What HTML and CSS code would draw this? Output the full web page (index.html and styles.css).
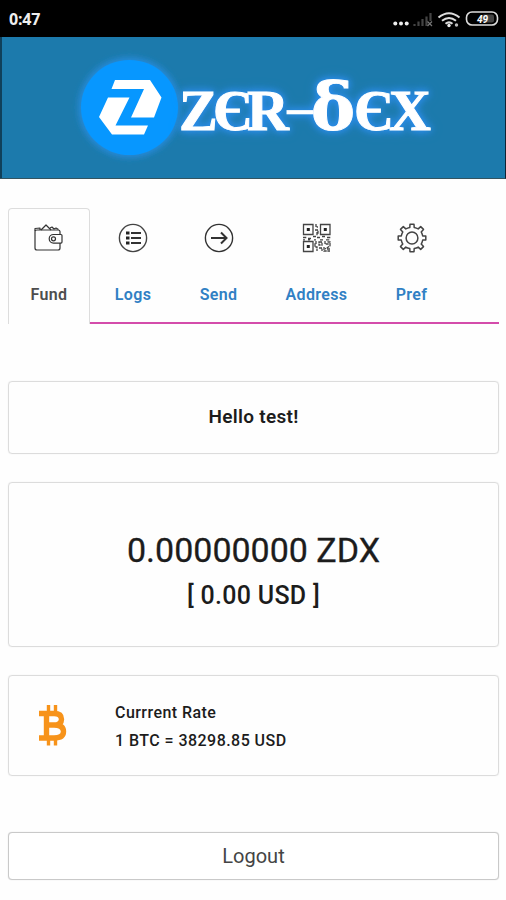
FILE: index.html
```html
<!DOCTYPE html>
<html lang="en">
<head>
<meta charset="utf-8">
<title>ZER-DEX</title>
<link rel="stylesheet" href="styles.css">
</head>
<body>
<header class="status">
  <span class="clock">0:47</span>
  <svg class="status-icons" width="112" height="22" viewBox="0 0 112 22">
    <g fill="#eee"><circle cx="4.300" cy="14.500" r="2"/><circle cx="10" cy="14.500" r="2"/><circle cx="15.700" cy="14.500" r="2"/></g>
    <path d="M23.500 15v2M27.500 12.500V17M31.500 10v7M35.500 7.500V17M39.500 4v8" stroke="#444" stroke-width="2.200"/>
    <path d="M36.500 12.500l4.500 4.500m0-4.500l-4.500 4.500" stroke="#777" stroke-width="1.200"/>
    <g fill="none" stroke="#ddd" stroke-width="2"><path d="M47.500 8.500Q58 0 68.500 8.500M51 11.800q7-5.600 14 0M54.500 14.700q3.500-2.700 7 0"/></g>
    <circle cx="58" cy="16.500" r="1.700" fill="#eee"/><circle cx="65.500" cy="16" r="1.700" fill="#bbb"/>
    <rect x="75.500" y="3" width="31" height="13" rx="5.500" fill="none" stroke="#ddd" stroke-width="1.600"/>
    <rect x="91" y="5.500" width="12" height="8" rx="2" fill="#444"/>
    <text class="battery" x="91.500" y="13.500" text-anchor="middle">49</text>
  </svg>
</header>
<div class="banner">
  <svg width="503" height="141" viewBox="2 37 503 141" role="img" aria-label="ZER-DEX">
    <defs><filter id="glow" x="-20%" y="-20%" width="140%" height="140%"><feGaussianBlur stdDeviation="3"/></filter></defs>
    <ellipse cx="129.500" cy="107.500" rx="51" ry="50" fill="#258bdc" filter="url(#glow)"/>
    <ellipse cx="129.500" cy="107.500" rx="48.500" ry="47.500" fill="#0797ff"/>
    <g fill="#fff">
      <path d="M115 80h35l11.500 17.500L154 117.500h-23L144 89h-32.500z"/>
      <path d="M108 97.500h21.500L115.500 125.500H148l-4 9h-32L99 117z"/>
    </g>
    <text class="wordmark" y="130" x="179 213 247 288 311 354 389">ZЄR<tspan class="dash" dy="-12">—</tspan><tspan class="delta" dy="12">δ</tspan>ЄX</text>
  </svg>
</div>
<nav class="tabs">
  <a class="tab fund active">
    <svg class="icon" viewBox="0 0 30 30"><g fill="none" stroke="#333" stroke-width="1.200" stroke-linejoin="round"><path d="M26 11V8.500q0-1.500-2-1.500H3Q1 7 1 8.500V25q0 2 2 2h21q2 0 2-2v-5"/><path d="M1 8V5.500l5-.5v2M7 7l5-5 5 5M16 5l2-1 2 2 2-1 2.500 1.500"/><path d="M27 11.500h-7.500a4.300 4.300 0 0 0 0 8.600H27q1 0 1-1v-6.600q0-1-1-1z"/><circle cx="19.500" cy="15.800" r="2"/></g></svg>
    <span>Fund</span>
  </a>
  <a class="tab logs">
    <svg class="icon" viewBox="0 0 30 30"><circle cx="15" cy="15" r="13.600" fill="none" stroke="#444" stroke-width="1.400"/><path d="M8 10h3.500M8 15h3.500M8 20h3.500" stroke="#222" stroke-width="3.200"/><path d="M13 10h10M13 15h10M13 20h10" stroke="#333" stroke-width="2"/></svg>
    <span>Logs</span>
  </a>
  <a class="tab send">
    <svg class="icon" viewBox="0 0 30 30" fill="none" stroke="#333"><circle cx="15" cy="15" r="13.600" stroke-width="1.400"/><path d="M7 15h15M17 9.500l5.500 5.500-5.500 5.500" stroke-width="2"/></svg>
    <span>Send</span>
  </a>
  <a class="tab address">
    <svg class="icon" viewBox="0 0 30 30"><g fill="none" stroke="#444" stroke-width="1.300"><path d="M1.500 1.500h9.500v10H1.500zM18.500 1.500H28v10h-9.500zM1.500 18.500h9.500v10H1.500z"/><path d="M14 1v3h2M13 7h3v4M15 9v4M1 14.500h4m1 1h3m2-2h3m1 1h3m2-1h3m2 1h4M1 16.800h2m3 0h2m4 0h2m4 0h3m3 0h4M14 18v3h-1v3h2v4M17 19h3v3h-3zM17 25h3v3M23 18v3h3v-2h2v4l-5 3M22 24v4h6M25 26h3" stroke-dasharray="3 .7"/></g><path d="M4.800 5h3v3h-3zM21.800 5h3v3h-3zM4.800 22h3v3h-3z" fill="#222"/></svg>
    <span>Address</span>
  </a>
  <a class="tab pref">
    <svg class="icon" viewBox="0 0 30 30" fill="none" stroke="#444" stroke-width="1.500" stroke-linejoin="round"><path d="M12.800 4.400 13 1.200h4l.2 3.200q2.300.5 4 1.500l2.500-2.300 2.800 2.800-2.300 2.500q1 1.700 1.500 4l3.100.1v4l-3.100.1q-.5 2.300-1.500 4l2.300 2.500-2.800 2.800-2.500-2.300q-1.700 1-4 1.500l-.2 3.200h-4l-.2-3.200q-2.300-.5-4-1.500l-2.500 2.300-2.800-2.800 2.300-2.500q-1-1.700-1.500-4L1.200 17v-4l3.100-.1q.5-2.300 1.500-4L3.500 6.400l2.800-2.800 2.500 2.300q1.700-1 4-1.500z"/><circle cx="15" cy="15" r="5.900"/></svg>
    <span>Pref</span>
  </a>
</nav>
<main>
  <section class="card hello">Hello test!</section>
  <section class="card balance">
    <div class="amount">0.00000000 ZDX</div>
    <div class="fiat">[ 0.00 USD ]</div>
  </section>
  <section class="card rate">
    <svg class="coin" width="28" height="41" viewBox="0 0 28 41"><g fill="none" stroke="#f7931a"><path d="M9.500 0v7M16.500 0v7M9.500 34v6.500M16.500 34v6.500" stroke-width="3.400"/><path d="M0 8.500h15q7.500 0 7.500 5.700T15 20H9m6 0q9.500 0 9.500 6.500T15 33H0M7.500 8v25" stroke-width="5.400"/></g></svg>
    <div class="rate-text"><div>Currrent Rate</div><div>1 BTC = 38298.85 USD</div></div>
  </section>
  <button class="logout">Logout</button>
</main>
</body>
</html>
```

FILE: styles.css
```css
* { box-sizing: border-box; }
body { margin: 0; width: 506px; height: 900px; overflow: hidden; background: #fefefe; color: #1c1c1c; font-family: Roboto, "Liberation Sans", sans-serif; }
.status { display: flex; justify-content: space-between; height: 37px; padding: 8px 2px 0 9px; background: #000; color: #eee; }
.clock { font: 700 16px/22px "Open Sans", sans-serif; letter-spacing: -.2px; }
.status-icons { display: block; margin-top: 1px; margin-right: 1px; }
.battery { font: italic 700 10px Roboto, sans-serif; fill: #fff; }
.banner { height: 142px; padding-left: 2px; border-right: 1px solid #123; border-bottom: 1px solid #345460; background: #1c7aac; box-shadow: inset 2px 0 #10405a; }
.banner svg { display: block; }
.wordmark { font: 700 58px "Liberation Serif", serif; fill: #fff; stroke: #fff; stroke-width: 1px; filter: drop-shadow(0 0 3px #2b8df0) drop-shadow(0 0 4px #2b8be0); }
.delta { font: 700 66px "DejaVu Serif", serif; }
.dash { font-size: 24px; stroke-width: 2.5px; }
.tabs { display: flex; height: 116px; margin: 29px 7px 0 8px; }
.tab { display: flex; flex-direction: column; align-items: center; padding-top: 15px; border-bottom: 2px solid #d44cab; color: #3080c4; font-size: 16px; font-weight: 600; line-height: 20px; letter-spacing: .35px; }
.tab span { margin-top: 32px; }
.icon { display: block; width: 30px; height: 30px; }
.fund { width: 82px; padding-top: 14px; border: 1px solid #ddd; border-bottom: 0; border-radius: 4px 4px 0 0; color: #4d4d4d; }
.logs { width: 86px; }
.send { width: 85px; }
.address { width: 111px; }
.pref { flex: 1; padding-right: 48px; }
main { display: flex; flex-direction: column; padding: 57px 7px 0 8px; }
.card { margin-bottom: 28px; border: 1px solid #dcdcdc; border-radius: 4px; box-shadow: 0 0 1px #ddd; }
.hello { height: 73px; padding-top: 23px; text-align: center; font-size: 19px; line-height: 24px; font-weight: 600; letter-spacing: .3px; }
.balance { height: 165px; padding-top: 45px; text-align: center; }
.amount { font-size: 34px; line-height: 44px; -webkit-text-stroke: .3px #1c1c1c; }
.fiat { font-size: 25px; font-weight: 500; line-height: 32px; margin-top: 8px; letter-spacing: .3px; }
.rate { display: flex; height: 101px; padding: 23px 0 0 30px; }
.coin { margin-top: 6px; }
.rate-text { margin-left: 48px; font-size: 16px; line-height: 28px; font-weight: 500; letter-spacing: .45px; }
.logout { height: 48px; margin-top: 28px; padding: 0; border: 1px solid #c9c9c9; border-radius: 4px; box-shadow: 0 0 1px #ccc; background: #fff; color: #444; font: 400 20px/24px Roboto, sans-serif; }
```
